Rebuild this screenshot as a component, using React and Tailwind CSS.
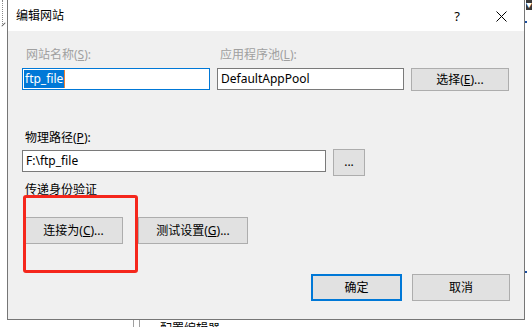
export default function App() {
  const font = { fontFamily: '"Noto Sans", "Noto Sans CJK SC", sans-serif' };
  return (
    <div className="relative w-[532px] h-[327px] bg-white overflow-hidden text-[12px] leading-[16px] text-black" style={font}>
      {/* background window fragments */}
      <div className="absolute left-[2px] top-0 h-[24px] border-l border-dotted border-[#8a8a8a]" />
      <div className="absolute left-[1px] top-[24px] w-[5px] h-[1px] bg-[#555] rotate-[-45deg]" />
      <div className="absolute left-[526px] top-0 w-[6px] h-[10px] bg-[#3a3a3a] text-[6px] leading-[10px] text-white text-center">▼</div>
      <div className="absolute left-[525px] top-[21px] w-[2px] h-[2px] bg-[#1c4fa0]" />
      <div className="absolute left-[525px] top-[271px] w-[2px] h-[2px] bg-[#1c4fa0]" />
      <div className="absolute left-[133px] top-[320px] w-[1px] h-[7px] bg-[#a0a0a0]" />
      <div className="absolute left-[139px] top-[320px] w-[1px] h-[7px] bg-[#a0a0a0]" />
      <div className="absolute left-[160px] top-[321px] text-[12px] leading-[16px]">配置编辑器</div>

      {/* dialog */}
      <div className="absolute left-[7px] top-0 w-[518px] h-[320px] border-l border-r border-b border-[#767676] bg-[#f0f0f0] flex flex-col">
        {/* title bar */}
        <div className="h-[31px] bg-white flex items-center pl-[8px] pr-[17px]">
          <span className="pt-[1px]">编辑网站</span>
          <span className="ml-auto mr-[36px] text-[13px]">?</span>
          <svg width="11" height="11" viewBox="0 0 11 11" className="mt-[1px]">
            <path d="M0.5 0.5 L10.5 10.5 M10.5 0.5 L0.5 10.5" stroke="#000" strokeWidth="1" />
          </svg>
        </div>

        {/* body */}
        <div className="flex-1 flex flex-col pl-[14px] pr-[14px] pt-[16px]">
          {/* labels row */}
          <div className="flex text-[#a0a0a0]">
            <div className="w-[195px] pl-[4px]">网站名称(<u>S</u>):</div>
            <div className="pl-[3px]">应用程序池(<u>L</u>):</div>
          </div>
          {/* inputs row */}
          <div className="flex items-start mt-[5px]">
            <div className="w-[188px] h-[22px] border border-[#0078d7] bg-white flex items-center pl-[1px]">
              <span className="bg-[#0078d7] text-white h-[18px] leading-[18px] pl-[1px] pr-[1px] border-r border-[#f08030]">ftp_file</span>
            </div>
            <div className="ml-[7px] w-[187px] h-[22px] border border-[#7a7a7a] bg-white flex items-center pl-[3px]">DefaultAppPool</div>
            <div className="ml-[7px] w-[98px] h-[23px] border border-[#adadad] bg-[#e1e1e1] flex items-center justify-center">选择(<u>E</u>)...</div>
          </div>

          <div className="mt-[39px] pl-[3px]">物理路径(<u>P</u>):</div>
          <div className="flex items-start mt-[4px]">
            <div className="w-[304px] h-[22px] border border-[#7a7a7a] bg-white flex items-center pl-[3px]">F:\ftp_file</div>
            <div className="ml-[7px] -mt-[1px] w-[32px] h-[27px] border border-[#adadad] bg-[#e1e1e1] flex items-center justify-center pb-[2px]">...</div>
          </div>

          <div className="mt-[6px] pl-[3px]">传递身份验证</div>
          <div className="flex mt-[19px] pl-[2px]">
            <div className="w-[99px] h-[27px] border border-[#adadad] bg-[#e1e1e1] flex items-center justify-center">连接为(<u>C</u>)...</div>
            <div className="ml-[15px] w-[110px] h-[27px] border border-[#adadad] bg-[#e1e1e1] flex items-center justify-center">测试设置(<u>G</u>)...</div>
          </div>

          <div className="flex justify-end mt-[30px]">
            <div className="w-[91px] h-[27px] border-2 border-[#0078d7] bg-[#e1e1e1] flex items-center justify-center">确定</div>
            <div className="ml-[10px] w-[98px] h-[27px] border border-[#adadad] bg-[#e1e1e1] flex items-center justify-center">取消</div>
          </div>
        </div>
      </div>

      {/* red annotation box */}
      <div className="absolute left-[23px] top-[195px] w-[115px] h-[78px] border-[3px] border-[#f5271c] rounded-[3px]" />
    </div>
  );
}
